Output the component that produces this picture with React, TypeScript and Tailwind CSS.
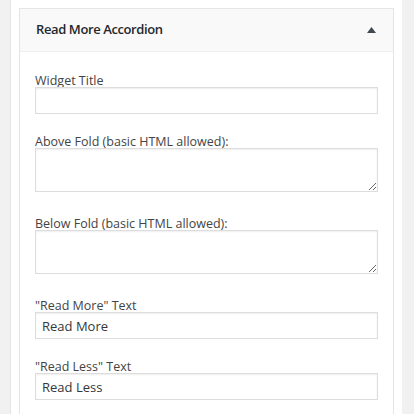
const FIELDS = [
  { label: "Widget Title", kind: "input", value: "" },
  { label: "Above Fold (basic HTML allowed):", kind: "textarea", value: "" },
  { label: "Below Fold (basic HTML allowed):", kind: "textarea", value: "" },
  { label: "\"Read More\" Text", kind: "input", value: "Read More" },
  { label: "\"Read Less\" Text", kind: "input", value: "Read Less" },
];

export default function App() {
  return (
    <div className="flex h-[414px] w-[414px] overflow-hidden bg-[#f1f1f1] pl-[10px] pr-[12px] font-['Open_Sans',sans-serif]">
      <div className="flex-1 border-l border-[#e5e5e5] bg-white px-2 pt-2">
        <div className="border border-[#e5e5e5] bg-white">
          {/* Header */}
          <div className="flex h-[43px] items-center justify-between border-b border-[#eeeeee] bg-[#f9f9f9] pl-[16px] pr-[17px]">
            <span className="text-[13px] font-semibold tracking-[-0.4px] text-[#23282d]">
              Read More Accordion
            </span>
            <svg width="9" height="6" viewBox="0 0 9 6" className="mt-[-1px]">
              <polygon points="4.5,0 9,6 0,6" fill="#404850" />
            </svg>
          </div>

          {/* Body */}
          <div className="px-[15px] pt-[19px]">
            {FIELDS.map((f) => (
              <div
                key={f.label}
                className={f.kind === "textarea" ? "mb-[22px]" : "mb-[18px]"}
              >
                <div className="h-4 text-[12.5px] leading-[19px] text-[#444]">
                  {f.label}
                </div>
                {f.kind === "textarea" ? (
                  <textarea
                    className="relative block h-[44px] w-full border border-[#dddddd] bg-white shadow-[inset_0_1px_2px_rgba(0,0,0,0.07)] outline-none"
                    defaultValue={f.value}
                  />
                ) : (
                  <input
                    className="relative block h-[27px] w-full border border-[#dddddd] bg-white px-[6px] text-[13px] text-[#32373c] shadow-[inset_0_1px_2px_rgba(0,0,0,0.07)] outline-none"
                    defaultValue={f.value}
                  />
                )}
              </div>
            ))}
          </div>
        </div>
      </div>
    </div>
  );
}
